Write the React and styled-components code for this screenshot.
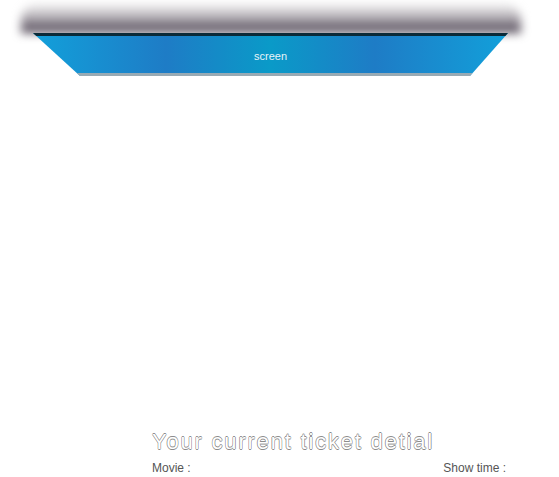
import React from "react";
import styled, { createGlobalStyle } from "styled-components";

const GlobalStyle = createGlobalStyle`
  body {
    margin: 0;
    background: #fff;
    font-family: "Liberation Sans", Arial, sans-serif;
  }
`;

const Page = styled.div`
  width: 559px;
  height: 477px;
  overflow: hidden;
  display: flex;
  flex-direction: column;
`;

const ScreenArea = styled.div`
  padding: 4px 0 0 33px;
  height: 392px;
  box-sizing: border-box;
`;

const Shadow = styled.div`
  width: 500px;
  height: 29px;
  margin-left: -12px;
  border-radius: 16px 16px 0 0;
  background: linear-gradient(
    to bottom,
    rgba(215, 215, 215, 0.3) 0%,
    rgba(175, 170, 176, 0.7) 35%,
    rgba(110, 102, 114, 0.9) 75%,
    #453b4b 100%
  );
  filter: blur(5px);
`;

const Panel = styled.div`
  width: 475px;
  height: 43px;
  display: flex;
  align-items: center;
  justify-content: center;
  clip-path: polygon(0 0, 100% 0, 92% 100%, 9.9% 100%);
  background:
    linear-gradient(
      to bottom,
      #0b2a38 0,
      #0b2a38 3px,
      transparent 3px,
      transparent calc(100% - 3px),
      #98aab4 calc(100% - 3px)
    ),
    linear-gradient(
      to right,
      #12a0da 0%,
      #1e7cc6 28%,
      #0a9ac8 50%,
      #1e7cc6 72%,
      #12a0da 100%
    );
`;

const ScreenLabel = styled.span`
  color: #e8f4f8;
  font-size: 11px;
  margin-top: 2px;
`;

const Ticket = styled.div`
  padding: 37px 53px 0 152px;
`;

const Title = styled.h2`
  margin: 0;
  font-family: "Liberation Sans", Arial, sans-serif;
  font-weight: normal;
  font-size: 22px;
  letter-spacing: 1.8px;
  color: #fff;
  text-shadow:
    -0.6px 0 #8c8c8c,
    0.6px 0 #8c8c8c,
    0 -0.6px #8c8c8c,
    0 0.6px #8c8c8c;
`;

const InfoRow = styled.div`
  display: flex;
  justify-content: space-between;
  margin-top: 6px;
  font-size: 12px;
  color: #555;
`;

export default function App() {
  return (
    <Page>
      <GlobalStyle />
      <ScreenArea>
        <Shadow />
        <Panel>
          <ScreenLabel>screen</ScreenLabel>
        </Panel>
      </ScreenArea>
      <Ticket>
        <Title>Your current ticket detial</Title>
        <InfoRow>
          <span>Movie :</span>
          <span>Show time :</span>
        </InfoRow>
      </Ticket>
    </Page>
  );
}
